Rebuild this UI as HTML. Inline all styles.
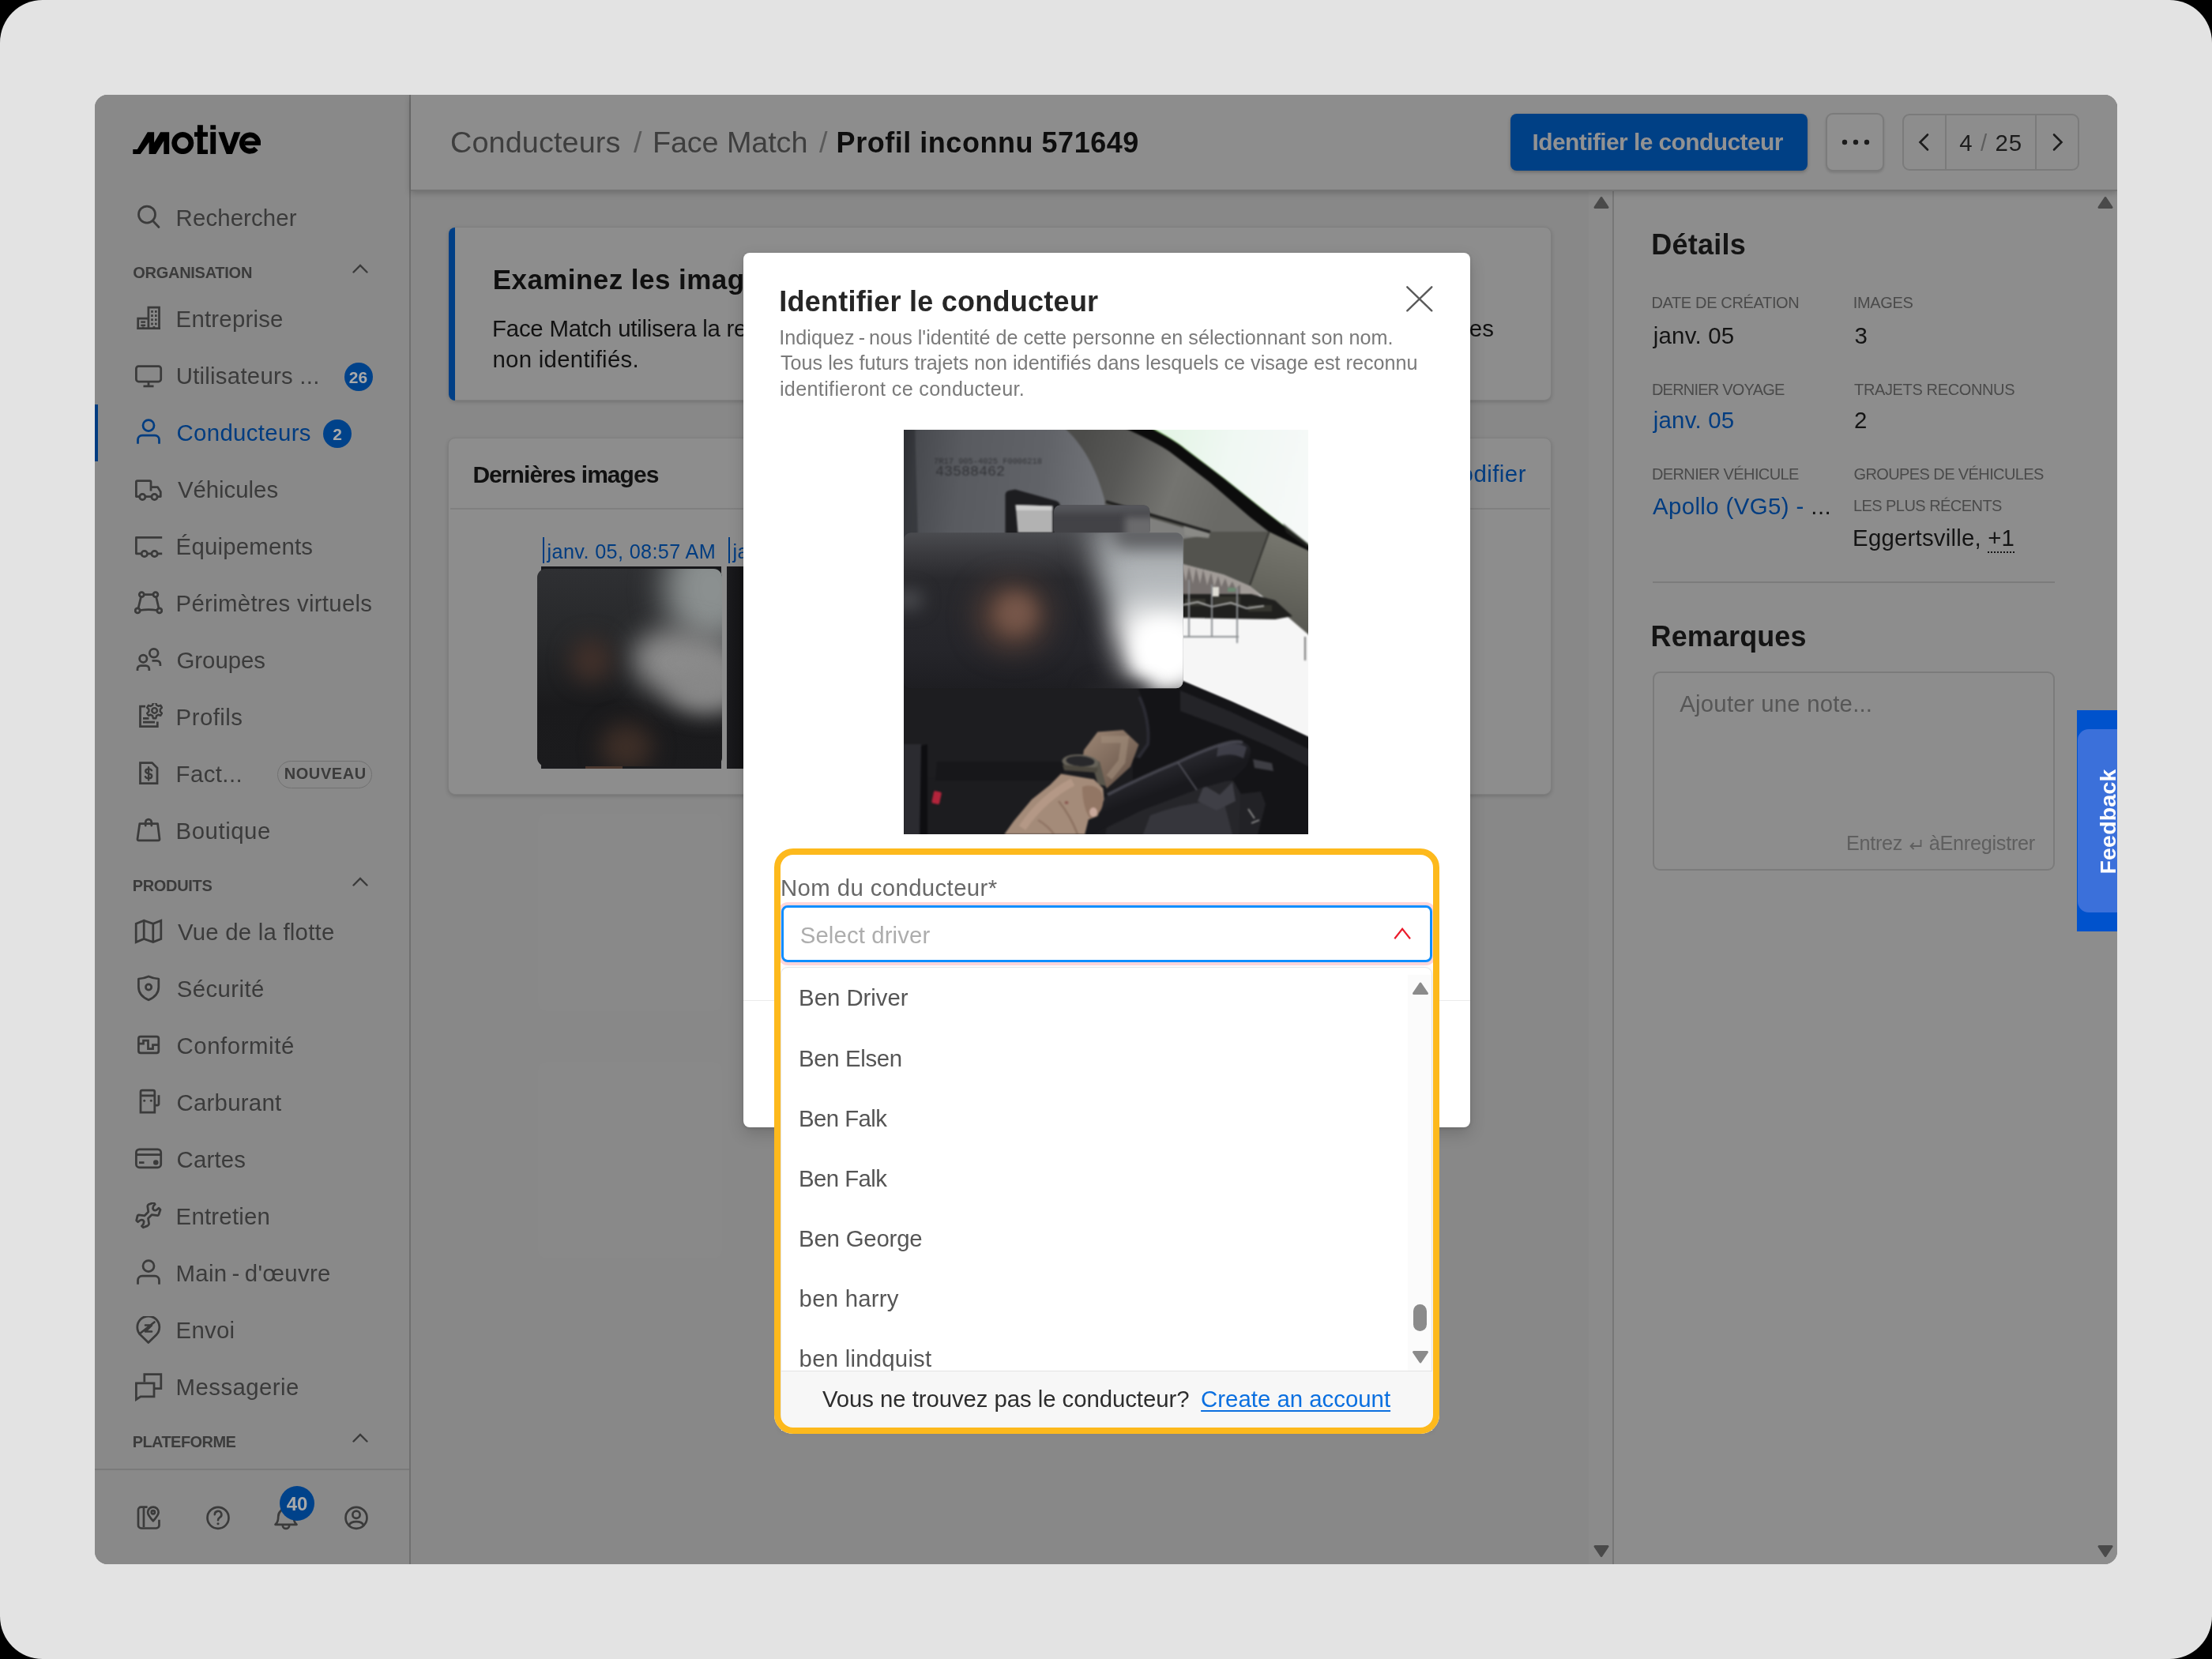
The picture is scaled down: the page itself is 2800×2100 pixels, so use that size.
<!DOCTYPE html>
<html lang="fr"><head><meta charset="utf-8"><title>Motive - Identifier le conducteur</title>
<style>
*{box-sizing:border-box}
html,body{margin:0;padding:0}
body{width:2800px;height:2100px;background:#000;overflow:hidden;font-family:"Liberation Sans",sans-serif}
.t{position:absolute;white-space:nowrap;line-height:1;display:block}
#canvas{will-change:transform;position:relative;width:2800px;height:2100px;background:#e3e3e3;border-radius:54px;overflow:hidden}
#app{position:absolute;left:120px;top:120px;width:2560px;height:1860px;border-radius:16px;overflow:hidden;background:#888}
#stage{position:absolute;left:-120px;top:-120px;width:2800px;height:2100px}
#top{position:absolute;left:0;top:0;width:2800px;height:2100px}
</style></head>
<body>
<div id="canvas">
<div id="app"><div id="stage">
<aside id="sidebar"><div style="position:absolute;left:120px;top:120px;width:400px;height:1860px;background:#898989"></div>
<div style="position:absolute;left:518px;top:120px;width:2px;height:1860px;background:#707070"></div>
<div style="position:absolute;left:120px;top:512px;width:4px;height:72px;background:#003c80"></div>
<svg style="position:absolute;left:167.8119349005425px;top:157.8119349005425px;" width="162.0" height="37.1" viewBox="197 197 1792 410" fill="none" stroke-linecap="round" stroke-linejoin="round"><g fill="#000" stroke="none"><polygon points="200,540 262,540 405,298 497,298 497,445 585,298 708,298 708,605 632,605 632,420 520,605 425,605 425,440 305,605 200,605"/><path fill-rule="evenodd" d="M897 297a155 155 0 1 0 0.01 0zM897 372a80 80 0 1 1 -0.01 0z"/><path d="M1103 200h77v98h68v64h-68v183h68v60h-145v-243h-43v-64h43z"/><rect x="1285" y="298" width="75" height="307"/><rect x="1285" y="200" width="75" height="62"/><polygon points="1395,298 1480,298 1548,500 1617,298 1705,298 1590,605 1510,605"/></g><circle cx="1840" cy="452" r="114" stroke="#000" stroke-width="72" stroke-linecap="butt" stroke-dasharray="640 76.3" transform="rotate(42 1840 452)"/><rect x="1760" y="425" width="228" height="60" fill="#000"/></svg>
<svg style="position:absolute;left:170px;top:258px;" width="36" height="36" viewBox="0 0 36 36" fill="none" stroke-linecap="round" stroke-linejoin="round"><g stroke="#3b3b3b" stroke-width="2.75"><circle cx="16" cy="13.5" r="10.5"/><path d="M23.5 21.5 L31 29.5"/></g></svg>
<span id="sb0" class="t" style="left:222.6px;top:260.7px;font-size:29.40px;font-weight:400;color:#3b3b3b;letter-spacing:0.109px;">Rechercher</span>
<svg style="position:absolute;left:170px;top:386px;" width="36" height="36" viewBox="0 0 36 36" fill="none" stroke-linecap="round" stroke-linejoin="round"><g stroke="#3b3b3b" stroke-width="2.75"><path stroke-linejoin="miter" stroke-linecap="butt" d="M17.9 29.5V3.2H31.5V29.5M4.7 29.5V17.2H17.9M3.2 29.5H33"/><g stroke="none" fill="#3b3b3b"><rect x="21.2" y="7" width="2.6" height="2.8"/><rect x="26" y="7" width="2.6" height="2.8"/><rect x="21.2" y="12.2" width="2.6" height="2.8"/><rect x="26" y="12.2" width="2.6" height="2.8"/><rect x="21.2" y="17.4" width="2.6" height="2.8"/><rect x="26" y="17.4" width="2.6" height="2.8"/><rect x="21.2" y="22.6" width="2.6" height="2.8"/><rect x="26" y="22.6" width="2.6" height="2.8"/><rect x="8.3" y="20.4" width="5.8" height="2.4"/><rect x="8.3" y="24.6" width="5.8" height="2.4"/><rect x="9.8" y="27.5" width="2.8" height="2.5"/><rect x="23.5" y="27" width="2.8" height="3"/></g></g></svg>
<span id="sb1" class="t" style="left:222.6px;top:388.7px;font-size:29.40px;font-weight:400;color:#3b3b3b;letter-spacing:0.207px;">Entreprise</span>
<svg style="position:absolute;left:170px;top:458px;" width="36" height="36" viewBox="0 0 36 36" fill="none" stroke-linecap="round" stroke-linejoin="round"><g stroke="#3b3b3b" stroke-width="2.75"><rect x="2.4" y="5.5" width="31.3" height="19.5" rx="3"/><path d="M18 25V30.5M11.5 30.8H24.5" stroke-linecap="butt"/></g></svg>
<span id="sb2" class="t" style="left:222.7px;top:460.7px;font-size:29.40px;font-weight:400;color:#3b3b3b;letter-spacing:0.241px;">Utilisateurs ...</span>
<svg style="position:absolute;left:170px;top:530px;" width="36" height="36" viewBox="0 0 36 36" fill="none" stroke-linecap="round" stroke-linejoin="round"><g stroke="#003c80" stroke-width="2.75"><circle cx="18" cy="8.6" r="7"/><path stroke-linecap="butt" d="M4.5 31.8V26.5a5.5 5.5 0 0 1 5.5-5.5h16a5.5 5.5 0 0 1 5.5 5.5V31.8"/></g></svg>
<span id="sb3" class="t" style="left:223.5px;top:532.7px;font-size:29.40px;font-weight:400;color:#003c80;letter-spacing:0.340px;">Conducteurs</span>
<svg style="position:absolute;left:170px;top:602px;" width="36" height="36" viewBox="0 0 36 36" fill="none" stroke-linecap="round" stroke-linejoin="round"><g stroke="#3b3b3b" stroke-width="2.75"><path stroke-linecap="butt" d="M6.3 26.5H2.4V8a1.5 1.5 0 0 1 1.5-1.5H19.5a1.5 1.5 0 0 1 1.5 1.5V19.5M21 14.5H29.5L33.3 20.5V26.5H29.6M21.4 26.5H14.4"/><circle cx="10.3" cy="27" r="3.6"/><circle cx="25.5" cy="27" r="3.6"/></g></svg>
<span id="sb4" class="t" style="left:224.9px;top:604.7px;font-size:29.40px;font-weight:400;color:#3b3b3b;letter-spacing:-0.031px;">Véhicules</span>
<svg style="position:absolute;left:170px;top:674px;" width="36" height="36" viewBox="0 0 36 36" fill="none" stroke-linecap="round" stroke-linejoin="round"><g stroke="#3b3b3b" stroke-width="2.75"><path stroke-linecap="butt" d="M35.2 6.3H2.4V26.8H8.6M17 26.8H21.4M29.7 26.8H35.2"/><circle cx="12.8" cy="27" r="3.7"/><circle cx="25.6" cy="27" r="3.7"/></g></svg>
<span id="sb5" class="t" style="left:222.6px;top:676.7px;font-size:29.40px;font-weight:400;color:#3b3b3b;letter-spacing:0.191px;">Équipements</span>
<svg style="position:absolute;left:170px;top:746px;" width="36" height="36" viewBox="0 0 36 36" fill="none" stroke-linecap="round" stroke-linejoin="round"><g stroke="#3b3b3b" stroke-width="2.75"><circle cx="9.3" cy="6.6" r="3"/><circle cx="26.9" cy="6.6" r="3"/><circle cx="4.2" cy="26.9" r="3"/><circle cx="31.8" cy="26.9" r="3"/><path d="M12.3 6.6H23.9M8.5 9.6L5 24M27.7 9.6L31 24M7.2 26.5Q18 24.8 28.8 26.5"/></g></svg>
<span id="sb6" class="t" style="left:222.6px;top:748.7px;font-size:29.40px;font-weight:400;color:#3b3b3b;letter-spacing:0.284px;">Périmètres virtuels</span>
<svg style="position:absolute;left:170px;top:818px;" width="36" height="36" viewBox="0 0 36 36" fill="none" stroke-linecap="round" stroke-linejoin="round"><g stroke="#3b3b3b" stroke-width="2.75"><circle cx="24.7" cy="8.7" r="5.4"/><circle cx="11.3" cy="15.8" r="4.7"/><path stroke-linecap="butt" d="M4 31V28.8a4.2 4.2 0 0 1 4.2-4.2H14.6a4.2 4.2 0 0 1 4.2 4.2V31M22.5 18.3H28.5a4.4 4.4 0 0 1 4.4 4.4V25"/></g></svg>
<span id="sb7" class="t" style="left:223.5px;top:820.7px;font-size:29.40px;font-weight:400;color:#3b3b3b;letter-spacing:-0.032px;">Groupes</span>
<svg style="position:absolute;left:170px;top:890px;" width="36" height="36" viewBox="0 0 36 36" fill="none" stroke-linecap="round" stroke-linejoin="round"><g stroke="#3b3b3b" stroke-width="2.75"><path stroke-linecap="butt" stroke-linejoin="miter" d="M14 4H7.5V29.5H29.3V23.5M11 19.3H18.5M11 24H26"/><g transform="translate(25.600 9.400) scale(1.220) translate(-25.600 -9.400)"><circle cx="25.6" cy="9.4" r="2.7" stroke-width="2"/><path stroke-width="2" stroke-linejoin="round" d="M24.2 1.2h2.8l.6 2.5 1.9 1.1 2.4-.8 1.4 2.4-1.8 1.8v2.2l1.8 1.8-1.4 2.4-2.4-.8-1.9 1.1-.6 2.5h-2.8l-.6-2.5-1.9-1.1-2.4.8-1.4-2.4 1.8-1.8V8.2l-1.8-1.8 1.4-2.4 2.4.8 1.9-1.1z"/></g></g></svg>
<span id="sb8" class="t" style="left:222.6px;top:892.7px;font-size:29.40px;font-weight:400;color:#3b3b3b;letter-spacing:0.467px;">Profils</span>
<svg style="position:absolute;left:170px;top:962px;" width="36" height="36" viewBox="0 0 36 36" fill="none" stroke-linecap="round" stroke-linejoin="round"><g stroke="#3b3b3b" stroke-width="2.75"><path stroke-linecap="butt" stroke-linejoin="miter" d="M7.5 3.5H22.5L29 10V29.5H7.5Z"/><path stroke-width="2.4" d="M22 13.2c-.8-1.2-2.2-1.8-3.9-1.8-2.2 0-3.9 1.1-3.9 2.9 0 4 8 1.9 8 5.9 0 1.8-1.7 3-4.1 3-1.9 0-3.500-.8-4.200-2.200M18.1 9.300V25.600"/></g></svg>
<span id="sb9" class="t" style="left:222.6px;top:964.7px;font-size:29.40px;font-weight:400;color:#3b3b3b;letter-spacing:0.404px;">Fact...</span>
<svg style="position:absolute;left:170px;top:1034px;" width="36" height="36" viewBox="0 0 36 36" fill="none" stroke-linecap="round" stroke-linejoin="round"><g stroke="#3b3b3b" stroke-width="2.75"><path d="M6.8 8.6H29.600L32 28.200a1.500 1.500 0 0 1 -1.500 1.700H5.500a1.500 1.500 0 0 1 -1.500 -1.700Z"/><path d="M14.2 11V7a3.800 3.800 0 0 1 7.600 0V11"/></g></svg>
<span id="sb10" class="t" style="left:222.6px;top:1036.7px;font-size:29.40px;font-weight:400;color:#3b3b3b;letter-spacing:0.527px;">Boutique</span>
<svg style="position:absolute;left:170px;top:1162px;" width="36" height="36" viewBox="0 0 36 36" fill="none" stroke-linecap="round" stroke-linejoin="round"><g stroke="#3b3b3b" stroke-width="2.75"><path stroke-linejoin="miter" d="M2.2 7.300L12.200 3.200L23.800 7.300L33.800 3.200V26.500L23.800 30.600L12.200 26.500L2.200 30.600ZM12.200 3.200V26.500M23.800 7.300V30.600"/></g></svg>
<span id="sb11" class="t" style="left:224.9px;top:1164.7px;font-size:29.40px;font-weight:400;color:#3b3b3b;letter-spacing:0.229px;">Vue de la flotte</span>
<svg style="position:absolute;left:170px;top:1234px;" width="36" height="36" viewBox="0 0 36 36" fill="none" stroke-linecap="round" stroke-linejoin="round"><g stroke="#3b3b3b" stroke-width="2.75"><path d="M18.100 2C13.500 4 9.500 4.800 5.400 5V15.500C5.400 23 10.500 28.500 18.100 31.800C25.700 28.500 30.800 23 30.800 15.500V5C26.700 4.800 22.700 4 18.100 2Z"/><circle cx="18.100" cy="15.400" r="3.600"/></g></svg>
<span id="sb12" class="t" style="left:223.7px;top:1236.7px;font-size:29.40px;font-weight:400;color:#3b3b3b;letter-spacing:0.402px;">Sécurité</span>
<svg style="position:absolute;left:170px;top:1306px;" width="36" height="36" viewBox="0 0 36 36" fill="none" stroke-linecap="round" stroke-linejoin="round"><g stroke="#3b3b3b" stroke-width="2.75"><rect x="5.400" y="6.200" width="25.400" height="20.600" rx="2.500"/><path stroke-linecap="butt" stroke-linejoin="miter" d="M5.400 15H11.500V11H17.500V21.500H23.500V16.500H30.800"/></g></svg>
<span id="sb13" class="t" style="left:223.5px;top:1308.7px;font-size:29.40px;font-weight:400;color:#3b3b3b;letter-spacing:0.561px;">Conformité</span>
<svg style="position:absolute;left:170px;top:1378px;" width="36" height="36" viewBox="0 0 36 36" fill="none" stroke-linecap="round" stroke-linejoin="round"><g stroke="#3b3b3b" stroke-width="2.75"><path stroke-linecap="butt" stroke-linejoin="miter" d="M8 30.200V4a2 2 0 0 1 2 -2H23.800a2 2 0 0 1 2 2V30.200ZM8 8.800H25.800M25.800 21H29.500a1.500 1.500 0 0 0 1.500 -1.500V8.300"/><g stroke="none" fill="#3b3b3b"><circle cx="12.700" cy="15.300" r="1.500"/><circle cx="21.300" cy="15.300" r="1.500"/></g></g></svg>
<span id="sb14" class="t" style="left:223.5px;top:1380.7px;font-size:29.40px;font-weight:400;color:#3b3b3b;letter-spacing:0.251px;">Carburant</span>
<svg style="position:absolute;left:170px;top:1450px;" width="36" height="36" viewBox="0 0 36 36" fill="none" stroke-linecap="round" stroke-linejoin="round"><g stroke="#3b3b3b" stroke-width="2.75"><rect x="2.400" y="4.800" width="31.300" height="23" rx="4"/><path stroke-linecap="butt" d="M2.400 11.700H33.700M6 21.500H12.500"/><circle cx="27.300" cy="21.500" r="3.300" fill="#3b3b3b" stroke="none"/></g></svg>
<span id="sb15" class="t" style="left:223.5px;top:1452.7px;font-size:29.40px;font-weight:400;color:#3b3b3b;letter-spacing:0.195px;">Cartes</span>
<svg style="position:absolute;left:170px;top:1522px;" width="36" height="36" viewBox="0 0 36 36" fill="none" stroke-linecap="round" stroke-linejoin="round"><g stroke="#3b3b3b" stroke-width="2.75"><path d="M24.7 0.2L26.2 2.5Q23 5 23.6 8.3Q24.5 10.5 26.5 10.2Q28 10 31 7.2L33 9.2L30.9 15.5Q30.5 16.600 29.600 16.600L22 15.700L17.500 20.200L18.600 27.100Q18.400 28.800 16.800 29.600L11.300 31.800L9.500 30Q12.300 27.500 12.200 24.200Q11.500 22 9.200 22Q7.800 22 4.600 24.700L2.700 22.900L4.100 16.900Q4.500 15.800 5.600 15.800L13.100 16.800L17.800 12L16.800 5Q17 3.300 17.800 2.800Z"/></g></svg>
<span id="sb16" class="t" style="left:222.6px;top:1524.7px;font-size:29.40px;font-weight:400;color:#3b3b3b;letter-spacing:0.210px;">Entretien</span>
<svg style="position:absolute;left:170px;top:1594px;" width="36" height="36" viewBox="0 0 36 36" fill="none" stroke-linecap="round" stroke-linejoin="round"><g stroke="#3b3b3b" stroke-width="2.75"><circle cx="18" cy="8.6" r="7"/><path stroke-linecap="butt" d="M4.5 31.8V26.5a5.5 5.5 0 0 1 5.5-5.5h16a5.5 5.5 0 0 1 5.5 5.5V31.8"/></g></svg>
<span id="sb17" class="t" style="left:222.6px;top:1596.7px;font-size:29.40px;font-weight:400;color:#3b3b3b;letter-spacing:0.275px;">Main - d'œuvre</span>
<svg style="position:absolute;left:170px;top:1666px;" width="36" height="36" viewBox="0 0 36 36" fill="none" stroke-linecap="round" stroke-linejoin="round"><g stroke="#3b3b3b" stroke-width="2.75"><path d="M17.800 33.500L7.800 23.800a14 14 0 1 1 20 0Z"/><path stroke-width="2.600" d="M6.500 22.500L25.500 7.500M14 11.500H22L14 19.500H22"/></g></svg>
<span id="sb18" class="t" style="left:222.6px;top:1668.7px;font-size:29.40px;font-weight:400;color:#3b3b3b;letter-spacing:0.215px;">Envoi</span>
<svg style="position:absolute;left:170px;top:1738px;" width="36" height="36" viewBox="0 0 36 36" fill="none" stroke-linecap="round" stroke-linejoin="round"><g stroke="#3b3b3b" stroke-width="2.75"><path stroke-linejoin="miter" stroke-linecap="butt" d="M12.800 11.500V1.500H33.800V19.500H25.500"/><path stroke-linejoin="miter" stroke-linecap="butt" d="M2.400 12.800H25V29.800H8L2.400 33.500Z"/></g></svg>
<span id="sb19" class="t" style="left:222.6px;top:1740.7px;font-size:29.40px;font-weight:400;color:#3b3b3b;letter-spacing:0.422px;">Messagerie</span>
<span id="sh0" class="t" style="left:168.2px;top:335.0px;font-size:20.00px;font-weight:700;color:#3b3b3b;letter-spacing:-0.265px;">ORGANISATION</span>
<svg style="position:absolute;left:446px;top:333.5px;" width="20" height="12" viewBox="0 0 20 12" fill="none" stroke-linecap="round" stroke-linejoin="round"><path d="M1.500 10.500L10 2L18.500 10.500" stroke="#3b3b3b" stroke-width="2.400" stroke-linejoin="miter"/></svg>
<span id="sh1" class="t" style="left:167.7px;top:1111.0px;font-size:20.00px;font-weight:700;color:#3b3b3b;letter-spacing:-0.318px;">PRODUITS</span>
<svg style="position:absolute;left:446px;top:1109.5px;" width="20" height="12" viewBox="0 0 20 12" fill="none" stroke-linecap="round" stroke-linejoin="round"><path d="M1.500 10.500L10 2L18.500 10.500" stroke="#3b3b3b" stroke-width="2.400" stroke-linejoin="miter"/></svg>
<span id="sh2" class="t" style="left:167.7px;top:1815.4px;font-size:20.00px;font-weight:700;color:#3b3b3b;letter-spacing:-0.575px;">PLATEFORME</span>
<svg style="position:absolute;left:446px;top:1813.9px;" width="20" height="12" viewBox="0 0 20 12" fill="none" stroke-linecap="round" stroke-linejoin="round"><path d="M1.500 10.500L10 2L18.500 10.500" stroke="#3b3b3b" stroke-width="2.400" stroke-linejoin="miter"/></svg>
<div style="position:absolute;left:435.5px;top:458.5px;width:36px;height:36px;border-radius:50%;background:#00428a;display:flex;align-items:center;justify-content:center;font-size:21px;font-weight:700;color:#a9a9a9;line-height:1;padding-top:1px"><span id="bd26">26</span></div>
<div style="position:absolute;left:409.2px;top:530.5px;width:36px;height:36px;border-radius:50%;background:#00428a;display:flex;align-items:center;justify-content:center;font-size:21px;font-weight:700;color:#a9a9a9;line-height:1;padding-top:1px"><span id="bd2">2</span></div>
<div style="position:absolute;left:351px;top:963px;width:120px;height:35px;border:1.800px solid #717171;border-radius:18px"></div>
<span id="nouv" class="t" style="left:359.7px;top:969.3px;font-size:20.00px;font-weight:700;color:#3b3b3b;letter-spacing:0.590px;">NOUVEAU</span>
<div style="position:absolute;left:120px;top:1858.5px;width:398px;height:2px;background:#7a7a7a"></div>
<svg style="position:absolute;left:170px;top:1902.5px;" width="36" height="36" viewBox="0 0 36 36" fill="none" stroke-linecap="round" stroke-linejoin="round"><g stroke="#3b3b3b" stroke-width="2.900" transform="translate(18 18.300) scale(.930) translate(-18 -18.300)"><path stroke-linecap="butt" d="M11.500 3.500V31M16.500 3.500H8a4 4 0 0 0 -4 4V28.500a4 4 0 0 0 4 4H28.500a4 4 0 0 0 4 -4V21"/><path d="M24.300 22.500C19.500 17.500 17 14.500 17 10.800a7.300 7.300 0 0 1 14.600 0C31.600 14.500 29.100 17.500 24.300 22.500Z"/><circle cx="24.300" cy="10.800" r="2.300"/></g></svg>
<svg style="position:absolute;left:258px;top:1902.5px;" width="36" height="36" viewBox="0 0 36 36" fill="none" stroke-linecap="round" stroke-linejoin="round"><g stroke="#3b3b3b" stroke-width="2.900" transform="translate(18 18.300) scale(.930) translate(-18 -18.300)"><circle cx="18" cy="18.300" r="14.500"/><path stroke-width="2.800" d="M13.500 13.800a4.600 4.600 0 1 1 6.800 4c-1.500 .9-2.300 1.800-2.300 3.600"/><circle cx="18" cy="26.300" r="1.700" fill="#3b3b3b" stroke="none"/></g></svg>
<svg style="position:absolute;left:344px;top:1902.5px;" width="36" height="36" viewBox="0 0 36 36" fill="none" stroke-linecap="round" stroke-linejoin="round"><g stroke="#3b3b3b" stroke-width="2.900" transform="translate(18 18.300) scale(.930) translate(-18 -18.300)"><path d="M3.500 27.500C7 24.500 7.500 21 7.500 16.500a10.500 10.500 0 0 1 21 0C28.500 21 29 24.500 32.500 27.500Z"/><path d="M13.500 28.500a4.500 4.500 0 0 0 9 0"/></g></svg>
<svg style="position:absolute;left:432.5px;top:1902.5px;" width="36" height="36" viewBox="0 0 36 36" fill="none" stroke-linecap="round" stroke-linejoin="round"><g stroke="#3b3b3b" stroke-width="2.900" transform="translate(18 18.300) scale(.930) translate(-18 -18.300)"><circle cx="18" cy="18.300" r="14.500"/><circle cx="18" cy="14" r="5"/><path d="M8 28.500c1.500-3.500 5-5 10-5s8.500 1.500 10 5"/></g></svg>
<div style="position:absolute;left:354.0px;top:1881.3px;width:44px;height:44px;border-radius:50%;background:#00428a;display:flex;align-items:center;justify-content:center;font-size:24px;font-weight:700;color:#a9a9a9;line-height:1;padding-top:1px"><span id="bd40">40</span></div></aside>
<main id="main"><div style="position:absolute;left:520px;top:240px;width:1522px;height:1740px;background:#888888"></div>
<div style="position:absolute;left:2011px;top:240px;width:31px;height:1740px;background:#8b8b8b"></div>
<div style="position:absolute;left:2041px;top:240px;width:2px;height:1740px;background:#777"></div>
<svg style="position:absolute;left:2016.5px;top:247px;" width="20" height="19" viewBox="0 0 20 19" fill="none" stroke-linecap="round" stroke-linejoin="round"><path d="M2 15.500L10 3.500L18 15.500Z" fill="#4a4a4a" stroke="#4a4a4a" stroke-width="3"/></svg>
<svg style="position:absolute;left:2016.5px;top:1954px;" width="20" height="19" viewBox="0 0 20 19" fill="none" stroke-linecap="round" stroke-linejoin="round"><path d="M2 3.500L10 15.500L18 3.500Z" fill="#4a4a4a" stroke="#4a4a4a" stroke-width="3"/></svg>
<div style="position:absolute;left:568px;top:287px;width:1396px;height:220px;background:#8d8d8d;border:1.500px solid #7f7f7f;border-radius:9px;box-shadow:0 2px 5px rgba(0,0,0,.160)"></div>
<div style="position:absolute;left:568px;top:287.5px;width:8px;height:219.5px;background:#003f86;border-radius:9px 0 0 9px"></div>
<span id="bn1" class="t" style="left:623.7px;top:336.2px;font-size:35.00px;font-weight:700;color:#101010;letter-spacing:0.442px;">Examinez les images</span>
<span id="bn2" class="t" style="left:623.1px;top:400.6px;font-size:29.40px;font-weight:400;color:#121212;letter-spacing:-0.242px;">Face Match utilisera la reconnaissance faciale pour identifier les</span>
<span id="bn2b" class="t" style="left:1859.8px;top:400.6px;font-size:29.40px;font-weight:400;color:#121212;letter-spacing:0.000px;">es</span>
<span id="bn3" class="t" style="left:623.5px;top:440.4px;font-size:29.40px;font-weight:400;color:#121212;letter-spacing:0.269px;">non identifiés.</span>
<div style="position:absolute;left:567px;top:554px;width:1397px;height:452px;background:#8d8d8d;border:1.500px solid #7f7f7f;border-radius:9px;box-shadow:0 2px 5px rgba(0,0,0,.160)"></div>
<div style="position:absolute;left:570px;top:643px;width:1392px;height:2px;background:#808080"></div>
<span id="im1" class="t" style="left:598.4px;top:585.5px;font-size:30.00px;font-weight:700;color:#111;letter-spacing:-0.940px;">Dernières images</span>
<span id="im2" class="t" style="left:1823.6px;top:585.0px;font-size:29.40px;font-weight:400;color:#003c80;letter-spacing:0.479px;">Modifier</span>
<div style="position:absolute;left:686.5px;top:680px;width:2.5px;height:33px;background:#003c80"></div>
<span id="ts1" class="t" style="left:692.6px;top:685.6px;font-size:25.20px;font-weight:400;color:#003c80;letter-spacing:0.376px;">janv. 05, 08:57 AM</span>
<div style="position:absolute;left:921.5px;top:680px;width:2.5px;height:33px;background:#003c80"></div>
<span id="ts2" class="t" style="left:927.6px;top:685.6px;font-size:25.20px;font-weight:400;color:#003c80;letter-spacing:0.376px;">janv. 05, 08:58 AM</span>
<div style="position:absolute;left:685px;top:717px;width:228px;height:256px;background:linear-gradient(180deg,#17171a,#1b1b1e)"></div>
<div style="position:absolute;left:920px;top:717px;width:228px;height:256px;background:linear-gradient(90deg,#1b1b1e 0,#141416 18px,#1d1d20 40px)"></div>
<div style="position:absolute;left:741px;top:968px;width:47px;height:5px;background:#4a372e"></div>
<div style="position:absolute;left:680px;top:719.7px;width:234px;height:250.7px;border-radius:11px;overflow:hidden;background:linear-gradient(180deg,#2f3033 0,#27282a 35%,#1a1a1c 70%,#1b1b1d 100%)"><div style="position:absolute;left:160px;top:-45px;width:120px;height:140px;border-radius:50%;background:#8b9090;filter:blur(20px)"></div><div style="position:absolute;left:118px;top:78px;width:150px;height:92px;border-radius:50%;background:#8c8c8c;filter:blur(17px);transform:rotate(14deg)"></div><div style="position:absolute;left:170px;top:120px;width:90px;height:60px;border-radius:50%;background:#888;filter:blur(15px)"></div><div style="position:absolute;left:42px;top:88px;width:52px;height:56px;border-radius:50%;background:#41302a;filter:blur(14px)"></div><div style="position:absolute;left:80px;top:196px;width:66px;height:60px;border-radius:50%;background:#3d2e27;filter:blur(14px)"></div></div>
<div style="position:absolute;left:681px;top:1030px;width:233px;height:250px;background:rgba(255,255,255,.012);border-radius:10px"></div>
<div style="position:absolute;left:681px;top:1344px;width:233px;height:249px;background:rgba(255,255,255,.012);border-radius:10px"></div></main>
<section id="details"><div style="position:absolute;left:2043px;top:240px;width:637px;height:1740px;background:#8d8d8d"></div>
<svg style="position:absolute;left:2654.5px;top:247px;" width="20" height="19" viewBox="0 0 20 19" fill="none" stroke-linecap="round" stroke-linejoin="round"><path d="M2 15.500L10 3.500L18 15.500Z" fill="#4a4a4a" stroke="#4a4a4a" stroke-width="3"/></svg>
<svg style="position:absolute;left:2654.5px;top:1954px;" width="20" height="19" viewBox="0 0 20 19" fill="none" stroke-linecap="round" stroke-linejoin="round"><path d="M2 3.500L10 15.500L18 3.500Z" fill="#4a4a4a" stroke="#4a4a4a" stroke-width="3"/></svg>
<span id="dt0" class="t" style="left:2090.3px;top:291.9px;font-size:36.00px;font-weight:700;color:#141414;letter-spacing:0.254px;">Détails</span>
<span id="dl1" class="t" style="left:2090.4px;top:373.1px;font-size:20.00px;font-weight:400;color:#4a4a4a;letter-spacing:-0.349px;">DATE DE CRÉATION</span>
<span id="dl2" class="t" style="left:2345.8px;top:373.1px;font-size:20.00px;font-weight:400;color:#4a4a4a;letter-spacing:-0.367px;">IMAGES</span>
<span id="dv1" class="t" style="left:2092.7px;top:409.5px;font-size:29.40px;font-weight:400;color:#141414;letter-spacing:0.250px;">janv. 05</span>
<span id="dv2" class="t" style="left:2347.4px;top:409.5px;font-size:29.40px;font-weight:400;color:#141414;letter-spacing:0.000px;">3</span>
<span id="dl3" class="t" style="left:2090.9px;top:482.6px;font-size:20.00px;font-weight:400;color:#4a4a4a;letter-spacing:-0.774px;">DERNIER VOYAGE</span>
<span id="dl4" class="t" style="left:2347.1px;top:482.6px;font-size:20.00px;font-weight:400;color:#4a4a4a;letter-spacing:-0.369px;">TRAJETS RECONNUS</span>
<span id="dv3" class="t" style="left:2092.7px;top:517.0px;font-size:29.40px;font-weight:400;color:#003c80;letter-spacing:0.250px;">janv. 05</span>
<span id="dv4" class="t" style="left:2347.0px;top:517.0px;font-size:29.40px;font-weight:400;color:#141414;letter-spacing:0.000px;">2</span>
<span id="dl5" class="t" style="left:2090.9px;top:589.8px;font-size:20.00px;font-weight:400;color:#4a4a4a;letter-spacing:-0.607px;">DERNIER VÉHICULE</span>
<span id="dl6" class="t" style="left:2346.5px;top:589.8px;font-size:20.00px;font-weight:400;color:#4a4a4a;letter-spacing:-0.599px;">GROUPES DE VÉHICULES</span>
<span id="dv5" class="t" style="left:2091.9px;top:625.6px;font-size:29.40px;font-weight:400;color:#003c80;letter-spacing:0.404px;">Apollo (VG5) - <span style="color:#141414">...</span></span>
<span id="dl7" class="t" style="left:2345.9px;top:629.6px;font-size:20.00px;font-weight:400;color:#4a4a4a;letter-spacing:-0.545px;">LES PLUS RÉCENTS</span>
<span id="dv6" class="t" style="left:2345.1px;top:666.0px;font-size:29.40px;font-weight:400;color:#141414;letter-spacing:0.205px;">Eggertsville, <span style="border-bottom:2px dotted #141414;padding-bottom:1px">+1</span></span>
<div style="position:absolute;left:2092px;top:735.5px;width:509px;height:2px;background:#7c7c7c"></div>
<span id="dt1" class="t" style="left:2089.6px;top:788.1px;font-size:36.00px;font-weight:700;color:#141414;letter-spacing:0.099px;">Remarques</span>
<div style="position:absolute;left:2092px;top:850px;width:509px;height:251.5px;border:2px solid #7b7b7b;border-radius:9px;background:#8d8d8d"></div>
<span id="nt1" class="t" style="left:2126.3px;top:875.5px;font-size:29.40px;font-weight:400;color:#565656;letter-spacing:0.197px;">Ajouter une note...</span>
<span id="nt2" class="t" style="left:2336.9px;top:1055.0px;font-size:25.20px;font-weight:400;color:#5f5f5f;letter-spacing:-0.248px;">Entrez <svg width="20" height="16" viewBox="0 0 20 16" style="vertical-align:-1px" fill="none" stroke="#5f5f5f" stroke-width="1.800"><path d="M16.500 2V10H3.500M7.500 6L3.500 10L7.500 14"/></svg> àEnregistrer</span></section>
<header id="header"><div style="position:absolute;left:520px;top:120px;width:2160px;height:120px;background:#8d8d8d;box-shadow:0 2px 0 #747474, 0 4px 8px rgba(0,0,0,.22)"></div>
<span id="bc1" class="t" style="left:570.1px;top:161.9px;font-size:37.80px;font-weight:400;color:#3e3e3e;letter-spacing:0.097px;">Conducteurs</span>
<span id="bc2" class="t" style="left:802.0px;top:161.9px;font-size:37.80px;font-weight:400;color:#5a5a5a;letter-spacing:0.000px;">/</span>
<span id="bc3" class="t" style="left:825.9px;top:161.9px;font-size:37.80px;font-weight:400;color:#3e3e3e;letter-spacing:-0.101px;">Face Match</span>
<span id="bc4" class="t" style="left:1037.0px;top:161.9px;font-size:37.80px;font-weight:400;color:#5a5a5a;letter-spacing:0.000px;">/</span>
<span id="bc5" class="t" style="left:1058.6px;top:163.4px;font-size:36.00px;font-weight:700;color:#0e0e0e;letter-spacing:0.531px;">Profil inconnu 571649</span>
<div style="position:absolute;left:1912px;top:144px;width:376px;height:72px;background:#004085;border-radius:8px;box-shadow:0 2px 4px rgba(0,0,0,.25)"></div>
<span id="btn1" class="t" style="left:1939.5px;top:165.0px;font-size:30.00px;font-weight:700;color:#929292;letter-spacing:-0.598px;">Identifier le conducteur</span>
<div style="position:absolute;left:2311px;top:143px;width:74px;height:74px;background:#8f8f8f;border:2px solid #7b7b7b;border-radius:9px;box-shadow:0 2px 3px rgba(0,0,0,.12)"></div>
<svg style="position:absolute;left:2329px;top:170px;" width="40" height="20" viewBox="0 0 40 20" fill="none" stroke-linecap="round" stroke-linejoin="round"><g fill="#1c1c1c" stroke="none"><circle cx="6" cy="10" r="3.200"/><circle cx="20" cy="10" r="3.200"/><circle cx="34" cy="10" r="3.200"/></g></svg>
<div style="position:absolute;left:2408px;top:144px;width:224px;height:72px;background:#8d8d8d;border:2px solid #7b7b7b;border-radius:9px"></div>
<div style="position:absolute;left:2462px;top:145px;width:2px;height:70px;background:#7b7b7b"></div>
<div style="position:absolute;left:2576px;top:145px;width:2px;height:70px;background:#7b7b7b"></div>
<svg style="position:absolute;left:2424px;top:166px;" width="24" height="28" viewBox="0 0 24 28" fill="none" stroke-linecap="round" stroke-linejoin="round"><path d="M16 4.500L6.500 14L16 23.500" stroke="#1c1c1c" stroke-width="2.600" stroke-linejoin="miter"/></svg>
<svg style="position:absolute;left:2592px;top:166px;" width="24" height="28" viewBox="0 0 24 28" fill="none" stroke-linecap="round" stroke-linejoin="round"><path d="M8 4.500L17.500 14L8 23.500" stroke="#1c1c1c" stroke-width="2.600" stroke-linejoin="miter"/></svg>
<span id="pg" class="t" style="left:2480.3px;top:165.5px;font-size:29.40px;font-weight:400;color:#1c1c1c;letter-spacing:1.072px;">4 <span style="color:#5e5e5e">/</span> 25</span></header>
<div style="position:absolute;left:2628.7px;top:898.7px;width:51.3px;height:280px;background:#0052cc"></div>
<div style="position:absolute;left:2630px;top:923px;width:50px;height:231.6px;background:#3b70da;border-radius:14px 0 0 14px"></div>
<span id="fb" style="position:absolute;left:2668px;top:1040px;width:0;height:0;"><span style="position:absolute;left:0;top:0;transform:translate(-50%,-50%) rotate(-90deg);white-space:nowrap;font-size:28.5px;font-weight:700;color:#fff;line-height:1;letter-spacing:0.200px">Feedback</span></span>
</div></div>
<div id="top">
<div id="modal" role="dialog"><div style="position:absolute;left:940.7px;top:320px;width:920.2px;height:1107.3px;background:#fff;border-radius:8px;box-shadow:0 8px 20px rgba(0,0,0,.170),0 1px 4px rgba(0,0,0,.120)"></div>
<span id="mt" class="t" style="left:986.2px;top:364.1px;font-size:36.00px;font-weight:700;color:#262626;letter-spacing:0.256px;">Identifier le conducteur</span>
<svg style="position:absolute;left:1778px;top:360px;" width="38" height="38" viewBox="0 0 38 38" fill="none" stroke-linecap="round" stroke-linejoin="round"><path d="M3.300 3.300L34.300 33.300M34.300 3.300L3.300 33.300" stroke="#5a5a5a" stroke-width="2.400"/></svg>
<span id="mp1" class="t" style="left:986.3px;top:415.3px;font-size:25.20px;font-weight:400;color:#7a7a7a;letter-spacing:0.008px;">Indiquez - nous l'identité de cette personne en sélectionnant son nom.</span>
<span id="mp2" class="t" style="left:988.0px;top:447.4px;font-size:25.20px;font-weight:400;color:#7a7a7a;letter-spacing:0.001px;">Tous les futurs trajets non identifiés dans lesquels ce visage est reconnu</span>
<span id="mp3" class="t" style="left:986.9px;top:479.5px;font-size:25.20px;font-weight:400;color:#7a7a7a;letter-spacing:0.331px;">identifieront ce conducteur.</span>

<svg style="position:absolute;left:1144px;top:544px" width="512" height="512" viewBox="0 0 512 512">
<defs>
<filter id="b1" filterUnits="userSpaceOnUse" x="-80" y="-80" width="672" height="672" color-interpolation-filters="sRGB"><feGaussianBlur stdDeviation="1.100"/></filter>
<filter id="b2" filterUnits="userSpaceOnUse" x="-80" y="-80" width="672" height="672" color-interpolation-filters="sRGB"><feGaussianBlur stdDeviation="2.500"/></filter>
<filter id="b3" filterUnits="userSpaceOnUse" x="-80" y="-80" width="672" height="672" color-interpolation-filters="sRGB"><feGaussianBlur stdDeviation="5"/></filter>
<filter id="b8" filterUnits="userSpaceOnUse" x="-80" y="-80" width="672" height="672" color-interpolation-filters="sRGB"><feGaussianBlur stdDeviation="11"/></filter>
<filter id="b16" filterUnits="userSpaceOnUse" x="-80" y="-80" width="672" height="672" color-interpolation-filters="sRGB"><feGaussianBlur stdDeviation="19"/></filter>
<linearGradient id="gv" gradientUnits="userSpaceOnUse" x1="0" y1="0" x2="260" y2="30"><stop offset="0" stop-color="#33343a"/><stop offset=".070" stop-color="#484a4f"/><stop offset=".300" stop-color="#595b60"/><stop offset=".700" stop-color="#616368"/><stop offset="1" stop-color="#74767b"/></linearGradient>
<linearGradient id="gh" gradientUnits="userSpaceOnUse" x1="215" y1="40" x2="400" y2="110"><stop offset="0" stop-color="#4c4c4a"/><stop offset=".300" stop-color="#585856"/><stop offset=".650" stop-color="#747470"/><stop offset="1" stop-color="#6a6a66"/></linearGradient>
<linearGradient id="gsky" gradientUnits="userSpaceOnUse" x1="330" y1="10" x2="512" y2="60"><stop offset="0" stop-color="#e4f5e6"/><stop offset=".450" stop-color="#f0f8f3"/><stop offset="1" stop-color="#f6f9f8"/></linearGradient>
<linearGradient id="gpil" gradientUnits="userSpaceOnUse" x1="470" y1="130" x2="440" y2="250"><stop offset="0" stop-color="#77776f"/><stop offset=".500" stop-color="#67675f"/><stop offset="1" stop-color="#55554f"/></linearGradient>
<linearGradient id="gwh" gradientUnits="userSpaceOnUse" x1="330" y1="395" x2="350" y2="450"><stop offset="0" stop-color="#3c3c45"/><stop offset=".400" stop-color="#2a2a30"/><stop offset="1" stop-color="#19191d"/></linearGradient>
<linearGradient id="gskin" gradientUnits="userSpaceOnUse" x1="240" y1="385" x2="290" y2="440"><stop offset="0" stop-color="#96806f"/><stop offset="1" stop-color="#6b584c"/></linearGradient>
<linearGradient id="gbb" gradientUnits="userSpaceOnUse" x1="0" y1="130" x2="0" y2="328"><stop offset="0" stop-color="#4a4b4f"/><stop offset=".140" stop-color="#3a3a3e"/><stop offset=".300" stop-color="#29292d"/><stop offset=".750" stop-color="#25252a"/><stop offset="1" stop-color="#1e1e22"/></linearGradient>
<clipPath id="cp"><rect width="512" height="512"/></clipPath>
<clipPath id="cb"><rect x="0" y="130.300" width="353.600" height="197" rx="9"/></clipPath>
<clipPath id="cb2"><rect x="190" y="95.500" width="121.500" height="40" rx="8"/></clipPath>
</defs>
<g clip-path="url(#cp)">
<rect width="512" height="512" fill="#1c1c1f"/>
<g filter="url(#b1)">
<!-- headliner -->
<path d="M190 -5H520V300L354 175L250 140Z" fill="url(#gh)"/>
<path d="M258 92L388 129H462L437.700 197.700L404.800 183.400L354 170V131L258 131Z" fill="#53534e"/>
<path d="M300 108L354 124L388 133L354 138H300Z" fill="#80807e"/>
<path d="M354 121L388 129L386 137L356 134Z" fill="#8a8a86"/>
<path d="M256 91L388 129.500" stroke="#1f1f1e" stroke-width="3.400" fill="none"/>
<!-- windshield strip + sky -->
<path d="M273 -5Q320 16 337 28L388 67L438.500 110.800L462 129L520 157V-5Z" fill="#0c0c0c"/>
<path d="M307.500 -5Q341 12 355 23.400L405.500 61.800L456 102.300L520 151.500V-5Z" fill="#8ad868"/>
<path d="M310 -5Q342 12 356 23.400L406 61.500L456.500 102L520 151V-5Z" fill="url(#gsky)"/>
<path d="M480 118L512 144V150L484 130Z" fill="#2c2c2a" opacity=".600"/>
<!-- a-pillar -->
<path d="M462 129L520 157V266L480.700 232.300L437.700 197.700Z" fill="url(#gpil)"/>
<path d="M462.500 129.500L438 197" stroke="#2d2d2a" stroke-width="1.800" fill="none"/>
<!-- side window -->
<path d="M352 170L404.800 183.400L437.700 197.700L480.700 232.300L520 266V393L465 367L414 344L350 317Z" fill="#f6f6f6"/>
<path d="M352 170L404.800 183.400L437.700 197.700L452 210H352Z" fill="#a19b97"/>
<path d="M352 172l5 20 4-19 5 22 4-20 5 20 4-18 5 20 5-16 4 18 5-14 4 14 5-11 4 12 5-8 4 9 6-5V212H352Z" fill="#6f6966" opacity=".850"/>
<path d="M352 208H440L470 216L492 236L470 240L352 238Z" fill="#20201e"/>
<path d="M356 214h26v9h-26zM392 211h34v11h-34zM436 222h30v8h-30z" fill="#35352f"/>
<path d="M352 222l20-4 18 6 24-5 20 7 22-3" stroke="#e8e8e8" stroke-width="2" fill="none" opacity=".700"/>
<path d="M361 190V262M390 196V262M422 200V270M352 262H424" stroke="#8c8f92" stroke-width="2" fill="none"/>
<path d="M508 262V292" stroke="#777" stroke-width="2"/>
<rect x="391" y="199" width="8" height="12" fill="#dedcd4"/><rect x="410" y="200" width="10" height="5" fill="#6c8a72"/>
<!-- sun visor -->
<path d="M-5 -5H200C226 16 244 50 254 88L259 140H-5Z" fill="url(#gv)"/>
<path d="M-5 -5H14L18 140H-5Z" fill="#26272b" opacity=".500"/>
<!-- visor clip -->
<path d="M133 77L141 75.500L193 90Q198 92 198 97V136H128.500V82Q129 78 133 77Z" fill="#1d1d20"/>
<path d="M141.600 95L188.300 96.600V130H144.500Z" fill="#b2b2b2"/>
<path d="M141.600 95L188.300 96.600V102H142Z" fill="#cdcdcd"/>
</g>
<g fill="#2e2f33" font-family="Liberation Mono, monospace" font-weight="400" filter="url(#b1)" opacity=".900">
<text x="38" y="42.500" font-size="10.500" textLength="137" lengthAdjust="spacingAndGlyphs">7R17 905-4025 F0006218</text>
<text x="40" y="58" font-size="17.500" textLength="88" lengthAdjust="spacingAndGlyphs">43588462</text>
</g>
<!-- lower cabin -->
<g filter="url(#b1)">
<path d="M350 317L414 344L465 367L520 393V520H290V330Z" fill="#141417"/>
<path d="M350 330L414 357L465 381L520 408V430L465 402L414 380L350 356Z" fill="#242428"/>
<path d="M442 417L466 422L468 432L444 428Z" fill="#3e3e44"/>
<!-- torso / sleeve -->
<path d="M0 327H296C306 345 310 372 309 398L296 416L236 400L205 440H0Z" fill="#1d1d20"/>
<path d="M42 420H206L199 444H40Z" fill="#17171a"/>
<path d="M298 338C307 356 311 380 309 398L297 415" stroke="#2b2b33" stroke-width="4" fill="none"/>
<path d="M0 398H22V520H0Z" fill="#2b2b30"/>
<path d="M22 400L30 398V520H20Z" fill="#0e0e11"/>
<rect x="36.500" y="457.500" width="10" height="16" rx="2" fill="#b3243b" transform="rotate(12 41 466)"/>
<!-- steering wheel hub -->
<path d="M254 520L262 474Q340 446 417 444L432 470L440 520Z" fill="#26262a"/>
<path d="M300 520L312 488Q360 470 405 470L418 520Z" fill="#36363c"/>
<path d="M380 450L400 462L416 446L420 470L396 482L372 470Z" fill="#3f3f46"/>
<!-- rim -->
<path d="M231.500 498L254.600 465.700C290 446 320 432 347.200 421.700C370 410 390 401 405 397.400C415 394 423 393.500 428 395C437 398 440 403 438.700 408C438 416 436 421 432.900 426.400L416.700 442.600L375 454L301 482L240 512H222Z" fill="url(#gwh)"/>
<path d="M258 462C292 444 322 431 349 420C372 409 392 401 407 397C416 394.500 424 394 429 396" stroke="#4d4d58" stroke-width="4" fill="none" opacity=".800"/>
<path d="M398 400C412 396 426 396 434 402L430 416C420 410 408 410 396 414Z" fill="#4a4a55" opacity=".700"/>
<path d="M347 421L371 456" stroke="#55555e" stroke-width="1.600"/>
<path d="M426 461L452 458L458 474L446 520H424Z" fill="#222226"/>
<path d="M436 480l8 12M440 498l10-4" stroke="#9a9a9a" stroke-width="1.600"/>
<!-- arm, watch, hand -->
<path d="M228 405.500L245.400 382.400L277.800 380L297.500 398.600L287 426.400L257 454L251 442.600L243 421.700L226.900 412.500Z" fill="url(#gskin)"/>
<path d="M250 392L280 392L276 420L260 440" stroke="#a18d7b" stroke-width="9" fill="none" opacity=".600"/>
<path d="M236 417L248 420L256 451L246 449Z" fill="#59554b"/>
<ellipse cx="223.400" cy="420.500" rx="23" ry="9.500" fill="#67635a" transform="rotate(4 223 420)"/>
<ellipse cx="223.400" cy="419.500" rx="18" ry="6.500" fill="#28282b" transform="rotate(4 223 420)"/>
<path d="M201 424L246 428L244 434L203 431Z" fill="#4c483f"/>
<path d="M127.300 512L138.900 495.800L162 468L185.200 449.500L199 435.600L240.700 442.600L252.300 454.100L253.500 468L245.400 488.900L233.800 493.500L229.200 512Z" fill="#a48b79"/>
<path d="M150 504C166 480 190 458 214 446" stroke="#bda08d" stroke-width="10" fill="none" opacity=".650"/>
<path d="M226 452C236 448 250 452 252 464C254 478 248 488 236 492C230 484 226 470 226 452Z" fill="#927664"/>
<path d="M196 470C204 480 214 496 220 512" stroke="#866a5a" stroke-width="2.500" fill="none" opacity=".800"/>
<path d="M170 494C180 500 186 506 190 512" stroke="#866a5a" stroke-width="2.500" fill="none" opacity=".700"/>
<ellipse cx="240" cy="484" rx="5" ry="6" fill="#c8a89b"/>
<ellipse cx="206" cy="472" rx="2.500" ry="2" fill="#8a5a52"/>
</g>
<!-- blur patches -->
<g clip-path="url(#cb2)"><rect x="186" y="92" width="130" height="46" fill="#424246"/><rect x="180" y="90" width="140" height="14" fill="#57585c" filter="url(#b3)"/><rect x="280" y="110" width="40" height="30" fill="#6a6a6c" filter="url(#b3)"/></g>
<g clip-path="url(#cb)">
<rect x="-5" y="125" width="365" height="210" fill="url(#gbb)"/>
<path d="M236 120H390V262L296 262C268 240 244 200 236 120Z" fill="#a4a8ab" filter="url(#b16)"/>
<path d="M258 170H390V250H296Z" fill="#b6babd" filter="url(#b16)"/>
<path d="M268 226H390V330H300C280 306 266 268 268 226Z" fill="#ffffff" filter="url(#b16)"/>
<ellipse cx="328" cy="282" rx="38" ry="40" fill="#fff" filter="url(#b8)"/>
<path d="M262 118H390V150H270Z" fill="#5c5d60" filter="url(#b8)"/>
<path d="M236 322H316L292 350H226Z" fill="#27272b" filter="url(#b8)"/>
<ellipse cx="138" cy="236" rx="42" ry="40" fill="#60453a" filter="url(#b16)"/>
<ellipse cx="142" cy="232" rx="24" ry="24" fill="#77574a" filter="url(#b8)"/>
<ellipse cx="6" cy="215" rx="18" ry="12" fill="#505155" filter="url(#b8)"/>
</g>
</g>
</svg>

<div style="position:absolute;left:940.7px;top:1265.5px;width:920.2px;height:1.6px;background:#ebebeb"></div></div>
<div id="spotlight"><div style="position:absolute;left:980px;top:1074px;width:842px;height:741px;background:#fff;border-radius:24px"></div>
<span id="fl" class="t" style="left:988.0px;top:1108.9px;font-size:29.40px;font-weight:400;color:#686868;letter-spacing:0.367px;">Nom du conducteur*</span>
<div style="position:absolute;left:988.8px;top:1145.6px;width:824.2px;height:72px;border:3.600px solid #0d8eff;border-radius:8px;background:#fff;box-shadow:0 0 0 4px #ffd6da"></div>
<span id="sel" class="t" style="left:1012.7px;top:1169.0px;font-size:29.40px;font-weight:400;color:#adadad;letter-spacing:0.098px;">Select driver</span>
<svg style="position:absolute;left:1761px;top:1170px;" width="28" height="22" viewBox="0 0 28 22" fill="none" stroke-linecap="round" stroke-linejoin="round"><path d="M4.300 18.300L14.100 5.800L24 18.300" stroke="#eb1c2c" stroke-width="2.200" stroke-linejoin="miter" stroke-linecap="butt"/></svg>
<div style="position:absolute;left:988.4px;top:1224.3px;width:825px;height:584px;background:#fff;border:1.500px solid #e6e6e6;border-radius:9px 9px 0 0;box-shadow:0 3px 10px rgba(0,0,0,.08)"></div>
<div style="position:absolute;left:1782.3px;top:1233.7px;width:30px;height:502px;background:#fbfbfb"></div>
<svg style="position:absolute;left:1786px;top:1241px;" width="24" height="20" viewBox="0 0 24 20" fill="none" stroke-linecap="round" stroke-linejoin="round"><path d="M3.500 16.500L12 4L20.500 16.500Z" fill="#8b8b8b" stroke="#8b8b8b" stroke-width="3" stroke-linejoin="round"/></svg>
<svg style="position:absolute;left:1786px;top:1708px;" width="24" height="20" viewBox="0 0 24 20" fill="none" stroke-linecap="round" stroke-linejoin="round"><path d="M3.500 3.500L12 16L20.500 3.500Z" fill="#8b8b8b" stroke="#8b8b8b" stroke-width="3" stroke-linejoin="round"/></svg>
<div style="position:absolute;left:1789px;top:1650.5px;width:17px;height:34.5px;background:#8b8b8b;border-radius:9px"></div>
<span id="li0" class="t" style="left:1011.1px;top:1248.2px;font-size:29.40px;font-weight:400;color:#555;letter-spacing:-0.038px;">Ben Driver</span>
<span id="li1" class="t" style="left:1011.1px;top:1325.0px;font-size:29.40px;font-weight:400;color:#555;letter-spacing:-0.383px;">Ben Elsen</span>
<span id="li2" class="t" style="left:1011.1px;top:1400.6px;font-size:29.40px;font-weight:400;color:#555;letter-spacing:-0.602px;">Ben Falk</span>
<span id="li3" class="t" style="left:1011.1px;top:1477.4px;font-size:29.40px;font-weight:400;color:#555;letter-spacing:-0.602px;">Ben Falk</span>
<span id="li4" class="t" style="left:1011.1px;top:1552.5px;font-size:29.40px;font-weight:400;color:#555;letter-spacing:-0.220px;">Ben George</span>
<span id="li5" class="t" style="left:1011.6px;top:1629.3px;font-size:29.40px;font-weight:400;color:#555;letter-spacing:0.210px;">ben harry</span>
<span id="li6" class="t" style="left:1011.6px;top:1704.7px;font-size:29.40px;font-weight:400;color:#555;letter-spacing:0.214px;">ben lindquist</span>
<div style="position:absolute;left:989px;top:1735px;width:824px;height:76px;background:#f7f7f7;border-top:1.500px solid #e3e3e3"></div>
<span id="ft1" class="t" style="left:1040.9px;top:1756.2px;font-size:29.40px;font-weight:400;color:#2d2d2d;letter-spacing:-0.081px;">Vous ne trouvez pas le conducteur?</span>
<span id="ft2" class="t" style="left:1520.1px;top:1756.2px;font-size:29.40px;font-weight:400;color:#0a6fe0;letter-spacing:-0.011px;text-decoration:underline;text-decoration-thickness:2px;text-underline-offset:4px">Create an account</span>
<div style="position:absolute;left:980px;top:1074px;width:842px;height:741px;border:8.300px solid #fdb91c;border-radius:24px;box-shadow:0 0 0 0 transparent"></div></div>
</div>
</div>
</body></html>
